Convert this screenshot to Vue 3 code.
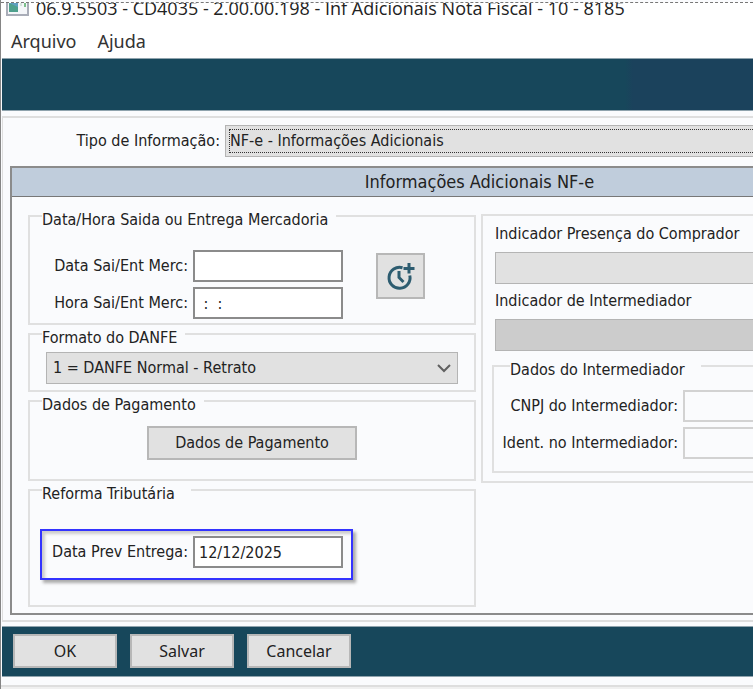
<template>
  <div class="window">
    <header class="title-bar">
      <svg class="app-icon" width="23" height="13" viewBox="0 0 23 13" aria-hidden="true">
        <path d="M1 0V12H22V0" fill="#f4f6f9" stroke="#a9adb8" stroke-width="2" />
        <rect x="3" y="0" width="9" height="9" fill="#4fa08d" />
        <path d="M3 0H12V4Z" fill="#5f9fc0" />
        <rect x="14" y="0" width="2" height="3" fill="#d5e3dc" />
        <rect x="18" y="0" width="2" height="4" fill="#7cc08c" />
      </svg>
      <h1>{{ title }}</h1>
    </header>

    <nav class="menu-bar">
      <a v-for="item in menu" :key="item" href="#">{{ item }}</a>
    </nav>

    <div class="toolbar"></div>

    <main class="content">
      <div class="type-row">
        <label for="tipo">Tipo de Informação:</label>
        <select id="tipo" v-model="form.tipo" class="combo focused">
          <option>NF-e - Informações Adicionais</option>
        </select>
      </div>

      <section class="panel">
        <h2>Informações Adicionais NF-e</h2>
        <div class="columns">
          <div class="left">
            <fieldset class="group departure">
              <legend>Data/Hora Saida ou Entrega Mercadoria</legend>
              <div class="fields">
                <label for="dataSai">Data Sai/Ent Merc:</label>
                <input id="dataSai" v-model="form.dataSaida" type="text" />
                <label for="horaSai">Hora Sai/Ent Merc:</label>
                <input id="horaSai" v-model="form.horaSaida" type="text" />
              </div>
              <button type="button" class="btn clock" aria-label="Data e hora atual" @click="fillNow">
                <svg width="30" height="30" viewBox="0 0 30 30" fill="none" stroke="#2d5c70">
                  <path d="M16.500 6.700A10.500 10.500 0 1 0 23.800 14.500" stroke-width="3" />
                  <path d="M13 10V16.500L17.500 21" stroke-width="3" />
                  <path d="M23 2V12.500M17.500 7.500H28.500" stroke-width="3" />
                </svg>
              </button>
            </fieldset>

            <fieldset class="group format">
              <legend>Formato do DANFE</legend>
              <div class="combo-box">
                <select v-model="form.danfe" class="combo" aria-label="Formato do DANFE">
                  <option>1 = DANFE Normal - Retrato</option>
                </select>
                <svg class="chevron" width="14" height="9" viewBox="0 0 14 9" aria-hidden="true">
                  <path d="M1 1L7 7L13 1" fill="none" stroke="#606060" stroke-width="2" />
                </svg>
              </div>
            </fieldset>

            <fieldset class="group payment">
              <legend>Dados de Pagamento</legend>
              <button type="button" class="btn">Dados de Pagamento</button>
            </fieldset>

            <fieldset class="group reform">
              <legend class="wide-gap">Reforma Tributária</legend>
              <div class="highlight">
                <label for="dataPrev">Data Prev Entrega:</label>
                <input id="dataPrev" v-model="form.dataPrevista" type="text" />
              </div>
            </fieldset>
          </div>

          <div class="right">
            <label for="presenca">Indicador Presença do Comprador</label>
            <select id="presenca" class="combo"></select>
            <label for="intermediador">Indicador de Intermediador</label>
            <select id="intermediador" class="combo" disabled></select>
            <fieldset class="group broker">
              <legend class="wide-gap">Dados do Intermediador</legend>
              <div class="fields">
                <label for="cnpj">CNPJ do Intermediador:</label>
                <input id="cnpj" type="text" disabled />
                <label for="ident">Ident. no Intermediador:</label>
                <input id="ident" type="text" disabled />
              </div>
            </fieldset>
          </div>
        </div>
      </section>
    </main>

    <footer class="actions">
      <button v-for="action in actions" :key="action" type="button" class="btn">{{ action }}</button>
    </footer>
    <div class="status-bar"></div>
  </div>
</template>

<script setup>
import { reactive } from 'vue'

const title = '06.9.5503 - CD4035 - 2.00.00.198 - Inf Adicionais Nota Fiscal - 10 - 8185'
const menu = ['Arquivo', 'Ajuda']
const actions = ['OK', 'Salvar', 'Cancelar']

const form = reactive({
  tipo: 'NF-e - Informações Adicionais',
  dataSaida: '',
  horaSaida: ' :  :',
  danfe: '1 = DANFE Normal - Retrato',
  dataPrevista: '12/12/2025'
})

function fillNow() {
  const now = new Date()
  form.dataSaida = now.toLocaleDateString('pt-BR')
  form.horaSaida = now.toLocaleTimeString('pt-BR')
}
</script>

<style>
body {
  margin: 0;
  background: #f0f0f0;
}
</style>

<style scoped>
* {
  box-sizing: border-box;
}

.window {
  min-height: 100vh;
  display: flex;
  flex-direction: column;
  overflow: hidden;
  border-left: 1px solid #858585;
  background: #fafbfd;
  color: #222;
  font-family: 'DejaVu Sans Condensed', 'Noto Sans', sans-serif;
  font-size: 16px;
  line-height: 20px;
}

button,
input,
select {
  font: inherit;
  color: inherit;
}

.title-bar {
  display: flex;
  align-items: flex-start;
  gap: 7px;
  height: 20px;
  margin-top: 2px;
  padding-left: 5px;
  overflow: hidden;
  border-top: 1px dashed #777;
  background: #fff;
}

.title-bar h1 {
  margin: 0;
  font: 400 18px/10px 'Open Sans', sans-serif;
  white-space: nowrap;
}

.app-icon {
  flex: none;
}

.menu-bar {
  display: flex;
  gap: 21px;
  padding: 9px 10px 7px;
  background: #fff;
  font-family: 'Noto Sans', sans-serif;
  font-size: 18px;
}

.menu-bar a {
  color: #333;
  text-decoration: none;
}

.toolbar {
  height: 53px;
  margin-left: 1px;
  border: solid #8fa3ad;
  border-width: 1px 0;
  background: linear-gradient(to right, #17475b 83%, #1b425c 84%);
}

.content {
  margin: 5px -196px 0 1px;
  padding: 7px 0 5px 7px;
  border: solid #dedede;
  border-width: 2px 0 2px 1px;
}

.type-row {
  display: flex;
  align-items: center;
  gap: 5px;
  padding-left: 63px;
}

.type-row label {
  flex: none;
  width: 147px;
  text-align: right;
}

.combo {
  display: block;
  width: 100%;
  height: 32px;
  padding: 0 6px;
  appearance: none;
  border: 1px solid #b4b4b4;
  border-radius: 0;
  background: #e1e1e1;
  opacity: 1;
}

.combo:disabled {
  background: #ccc;
}

.combo.focused {
  padding: 0 4px;
  outline: 1px dotted #333;
  outline-offset: -5px;
}

.panel {
  margin-top: 9px;
  border: 2px solid #8b8b8b;
}

.panel h2 {
  margin: 0;
  padding: 4px;
  border-bottom: 1px solid #777;
  background: #c0cddc;
  font-size: 18px;
  font-weight: 400;
  text-align: center;
}

.columns {
  display: flex;
  align-items: flex-start;
  gap: 5px;
  padding: 12px 16px 6px;
}

.left {
  flex: none;
  display: flex;
  flex-direction: column;
  gap: 2px;
  width: 448px;
}

.group {
  min-width: 0;
  margin: 0;
  border: 2px solid #e0e0e0;
}

.group legend {
  margin-left: 12px;
  padding: 8px 8px 0 0;
  line-height: 6px;
}

.group legend.wide-gap {
  padding-right: 16px;
}

.fields {
  display: grid;
  grid-template-columns: 158px 150px;
  align-items: center;
  gap: 5px;
}

.fields label {
  text-align: right;
  white-space: nowrap;
}

input {
  width: 150px;
  height: 32px;
  padding: 0 4px;
  border: 2px solid #8b8b8b;
  border-radius: 0;
  background: #fff;
}

input:disabled {
  width: 100%;
  border-color: #d2d2d2;
  background: #fafbfd;
}

.btn {
  height: 34px;
  padding: 0;
  border: 2px solid #b7b7b7;
  border-radius: 0;
  background: #e1e1e1;
}

.departure {
  display: flex;
  align-items: flex-start;
  gap: 33px;
  padding: 27px 0 4px;
}

.clock {
  display: flex;
  align-items: center;
  justify-content: center;
  width: 49px;
  height: 46px;
  margin-top: 3px;
}

.format {
  padding: 11px 0 6px;
}

.combo-box {
  position: relative;
  margin: 0 16px;
}

.chevron {
  position: absolute;
  top: 12px;
  right: 7px;
}

.payment {
  padding: 18px 0 19px;
}

.payment .btn {
  display: block;
  width: 210px;
  margin: 0 auto;
}

.reform {
  padding: 32px 0 25px;
}

.highlight {
  display: flex;
  align-items: center;
  justify-content: flex-end;
  gap: 5px;
  width: 313px;
  margin-left: 10px;
  padding: 5px 8px 10px 0;
  border: 2px solid #3333ff;
  box-shadow: 3px 3px 3px #aaa, inset 3px 3px 3px #ccc;
}

.right {
  flex: 1;
  display: flex;
  flex-direction: column;
  margin-top: 5px;
  padding: 8px 9px;
  border: 2px solid #e0e0e0;
}

.right > label {
  margin: 0 3px 8px;
}

.right > .combo {
  width: auto;
  margin: 0 3px 7px;
}

.broker {
  margin-top: 1px;
  padding: 17px 12px 12px 0;
}

.broker legend {
  margin-left: 16px;
}

.broker .fields {
  grid-template-columns: 184px 1fr;
}

.actions {
  display: flex;
  gap: 13px;
  margin: 4px 0 0 1px;
  padding: 7px 11px 8px;
  border: solid #8fa3ad;
  border-width: 1px 0;
  background: #17475b;
}

.actions .btn {
  width: 104px;
  font-family: 'Noto Sans', sans-serif;
}

.status-bar {
  flex: 1;
  margin-top: 8px;
  border-top: 2px solid #dedede;
  background: #f0f0f0;
}
</style>
